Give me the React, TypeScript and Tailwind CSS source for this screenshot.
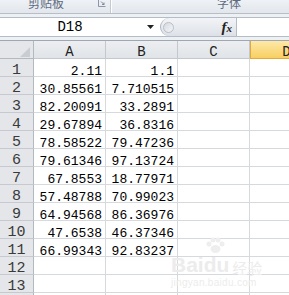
const rows: [string, string][] = [
  ['2.11', '1.1'],
  ['30.85561', '7.710515'],
  ['82.20091', '33.2891'],
  ['29.67894', '36.8316'],
  ['78.58522', '79.47236'],
  ['79.61346', '97.13724'],
  ['67.8553', '18.77971'],
  ['57.48788', '70.99023'],
  ['64.94568', '86.36976'],
  ['47.6538', '46.37346'],
  ['66.99343', '92.83237'],
  ['', ''],
  ['', ''],
  ['', ''],
]

const mono = "font-['Liberation_Mono',monospace]"

function Ribbon() {
  return (
    <div className="flex h-[14px] border-b border-[#b7bec8] bg-gradient-to-b from-[#eef1f5] to-[#e2e7ed] font-['Noto_Sans_CJK_SC',sans-serif] text-[12px] leading-none text-[#5f6c80]">
      <div className="flex w-[110px] items-start">
        <span className="ml-[28px] -mt-[3px]">剪贴板</span>
        <svg className="ml-[34px] mt-[0px]" width="8" height="7" viewBox="0 0 8 7">
          <path d="M0.5 0 V6.5 H7.5" stroke="#8b96a6" fill="none" />
          <path d="M3 1.5 L6 4.5 M6 2.5 V4.5 H4" stroke="#7d8898" fill="none" />
        </svg>
      </div>
      <div className="w-[2px] border-l border-[#c3cad4] border-r border-r-white" />
      <div className="flex-1">
        <span className="ml-[105px] -mt-[3px] block">字体</span>
      </div>
    </div>
  )
}

function FormulaBar() {
  return (
    <div className="flex h-[20px] border-y border-[#b4bcc7] bg-white">
      <div className="flex w-[160px] items-center">
        <span className={`${mono} w-[140px] text-center text-[14px] leading-none text-black`}>D18</span>
        <svg width="7" height="4" viewBox="0 0 7 4" className="ml-[7px]">
          <path d="M0 0 H7 L3.5 4 Z" fill="#222" />
        </svg>
      </div>
      <div className="flex w-[76px] items-center rounded-l-full border-l border-[#aeb6c1] bg-gradient-to-b from-[#f3f4f7] to-[#dde1e7]">
        <div className="ml-[2px] h-[11px] w-[11px] rounded-full border border-[#b8bfc9] bg-gradient-to-br from-[#d6dae0] to-[#f4f5f7]" />
        <span className="ml-auto mr-[4px] font-['Liberation_Serif',serif] text-[15px] font-bold italic leading-none text-[#222]">
          f<span className="text-[11px]">x</span>
        </span>
      </div>
      <div className="flex-1 border-l border-[#b4bcc7] bg-white" />
    </div>
  )
}

export default function App() {
  return (
    <div className="relative h-[295px] w-[289px] overflow-hidden bg-white">
      <Ribbon />
      <div className="h-[3px] bg-[#eef1f4]" />
      <FormulaBar />
      <div className="h-[3px] bg-[#eef1f4]" />

      <div className="border-t border-[#9fa7b2]">
        <div className="grid grid-cols-[34px_72px_72px_72px_72px]">
          <div className="flex h-[18px] items-end justify-end border-b border-r border-[#b3b9c1] bg-[#e4e6ea] pb-[1px] pr-[3px]">
            <svg width="10" height="10" viewBox="0 0 10 10">
              <path d="M10 0 V10 H0 Z" fill="#c9cdd3" />
            </svg>
          </div>
          {['A', 'B', 'C'].map((c) => (
            <div
              key={c}
              className={`${mono} h-[18px] border-b border-r border-[#c3c8ce] bg-gradient-to-b from-[#eceef1] to-[#e1e4e8] pt-[3px] text-center text-[14px] leading-[17px] text-[#222]`}
            >
              {c}
            </div>
          ))}
          <div
            className={`${mono} h-[18px] border-b border-l border-[#e2aa3c] bg-gradient-to-b from-[#fde9a8] to-[#f8cf5f] pt-[3px] text-center text-[14px] leading-[17px] text-[#222]`}
          >
            D
          </div>

          {rows.map(([a, b], i) => (
            <Row key={i} n={i + 1} a={a} b={b} />
          ))}
        </div>
      </div>

      {/* watermark */}
      <div className="pointer-events-none absolute left-[171px] top-[254px] select-none text-[#ececec]">
        <div className="flex items-end">
          <span className="font-['Liberation_Sans',sans-serif] text-[21px] font-bold leading-none">Bai</span>
          <span className="relative font-['Liberation_Sans',sans-serif] text-[21px] font-bold leading-none">
            <svg className="absolute -top-[17px] left-[1px]" width="20" height="17" viewBox="0 0 20 17">
              <circle cx="4" cy="7" r="2.5" fill="#eeeeee" />
              <circle cx="8" cy="3" r="2.5" fill="#eeeeee" />
              <circle cx="13" cy="3" r="2.5" fill="#eeeeee" />
              <circle cx="17" cy="7" r="2.5" fill="#eeeeee" />
              <ellipse cx="10.5" cy="12" rx="5" ry="4" fill="#eeeeee" />
            </svg>
            du
          </span>
          <span className="ml-[3px] font-['Noto_Sans_CJK_SC',sans-serif] text-[15px] leading-none">经验</span>
        </div>
        <div className="mt-[3px] font-['Liberation_Sans',sans-serif] text-[10px] leading-none tracking-[0.3px]">jingyan.baidu.com</div>
      </div>
    </div>
  )
}

function Row({ n, a, b }: { n: number; a: string; b: string }) {
  const cell = `${mono} h-[18px] border-b border-r border-[#d6d9dd] pt-[4px] pr-[3px] text-right text-[13px] leading-[17px] text-black`
  return (
    <>
      <div
        className={`${mono} h-[18px] border-b border-r border-[#b3b9c1] border-b-[#c6cad0] bg-[#e4e6ea] pt-[3px] text-center text-[15px] leading-[17px] text-[#3a3a3a]`}
      >
        {n}
      </div>
      <div className={cell}>{a}</div>
      <div className={cell}>{b}</div>
      <div className={cell} />
      <div className={cell} />
    </>
  )
}
